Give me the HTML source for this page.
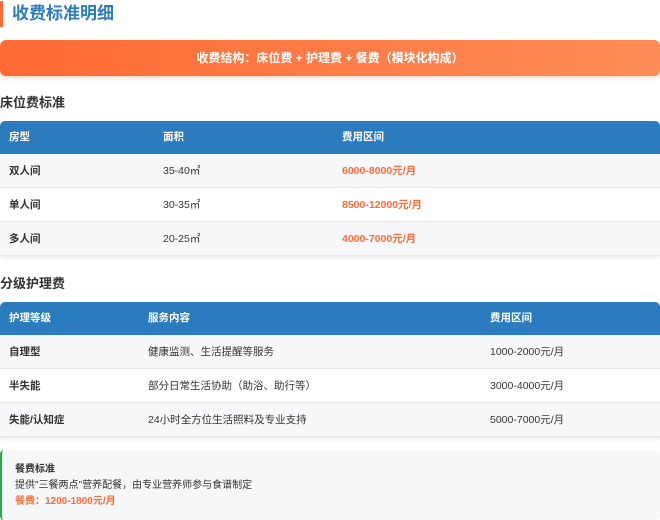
<!DOCTYPE html>
<html><head><meta charset="utf-8"><style>
*{margin:0;padding:0;box-sizing:border-box}
body{width:660px;height:517px;overflow:hidden;background:#fff;font-family:"Liberation Sans","Noto Sans CJK SC",sans-serif;color:#333;position:relative}
.title{position:absolute;left:0;top:1px;height:26px;border-left:3px solid #ff6b35;padding-left:9px;font-size:17px;font-weight:bold;color:#2b7bbf;line-height:26px}
.banner{position:absolute;left:0;top:40px;width:660px;height:36px;border-radius:6px;background:linear-gradient(90deg,#ff6a33,#ff8d57);color:#fff;font-size:12px;font-weight:bold;text-align:center;line-height:36px;box-shadow:0 2px 4px rgba(255,107,53,.25)}
h3{position:absolute;left:0;font-size:13px;font-weight:bold;color:#333}
.tbl{position:absolute;left:0;width:660px;border-radius:5px 5px 0 0;overflow:hidden;box-shadow:0 2px 4px rgba(0,0,0,.08)}
.row{position:relative;height:34px;font-size:10.5px;line-height:34px;border-bottom:1px solid #e8e8e8}
.row span{position:absolute;top:0}
.hd{background:#2b7bbf;color:#fff;font-weight:bold;height:33px;line-height:33px;border:none}
.g{background:#f7f8fa}.w{background:#fff}
.b{font-weight:bold;color:#333}
.o{color:#ff6b35;font-weight:bold}
.meal{position:absolute;left:0;top:450px;width:660px;height:70px;background:#f6f7f9;border-left:2px solid #2aa84a;border-radius:4px;padding:12px 13px;font-size:10px;line-height:16px}
</style></head><body>
<div class="title">收费标准明细</div>
<div class="banner">收费结构：床位费 + 护理费 + 餐费（模块化构成）</div>
<h3 style="top:92px">床位费标准</h3>
<div class="tbl" style="top:121px">
<div class="row hd"><span style="left:9px">房型</span><span style="left:163px">面积</span><span style="left:342px">费用区间</span></div>
<div class="row g"><span class="b" style="left:9px">双人间</span><span style="left:163px">35-40㎡</span><span class="o" style="left:342px">6000-8000元/月</span></div>
<div class="row w"><span class="b" style="left:9px">单人间</span><span style="left:163px">30-35㎡</span><span class="o" style="left:342px">8500-12000元/月</span></div>
<div class="row g"><span class="b" style="left:9px">多人间</span><span style="left:163px">20-25㎡</span><span class="o" style="left:342px">4000-7000元/月</span></div>
</div>
<h3 style="top:273px">分级护理费</h3>
<div class="tbl" style="top:302px">
<div class="row hd"><span style="left:9px">护理等级</span><span style="left:148px">服务内容</span><span style="left:490px">费用区间</span></div>
<div class="row g"><span class="b" style="left:9px">自理型</span><span style="left:148px">健康监测、生活提醒等服务</span><span style="left:490px">1000-2000元/月</span></div>
<div class="row w"><span class="b" style="left:9px">半失能</span><span style="left:148px">部分日常生活协助（助浴、助行等）</span><span style="left:490px">3000-4000元/月</span></div>
<div class="row g"><span class="b" style="left:9px">失能/认知症</span><span style="left:148px">24小时全方位生活照料及专业支持</span><span style="left:490px">5000-7000元/月</span></div>
</div>
<div class="meal"><div class="b">餐费标准</div><div>提供"三餐两点"营养配餐，由专业营养师参与食谱制定</div><div class="o">餐费：1200-1800元/月</div></div>
</body></html>
